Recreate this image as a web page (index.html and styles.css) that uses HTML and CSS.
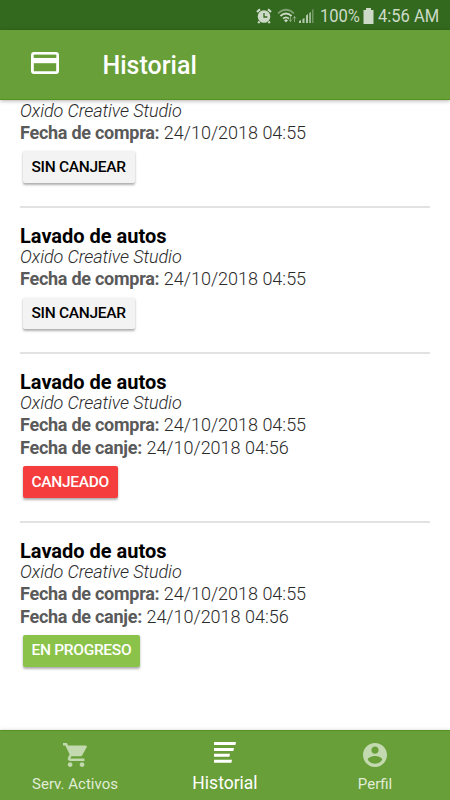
FILE: index.html
```html
<!DOCTYPE html>
<html lang="es">
<head>
<meta charset="utf-8">
<title>Historial</title>
<link rel="stylesheet" href="styles.css">
</head>
<body>
<div class="app">
  <div class="status">
    <svg class="alarm" viewBox="0 0 16 16"><circle cx="8" cy="8.5" r="6.3" fill="currentColor"/><path d="M1 4 4 1.2M15 4 12 1.2M3.5 13.5 2.2 15M12.5 13.5 13.8 15" stroke="currentColor" stroke-width="2.2"/><path d="M8 5v4h3.3" fill="none" stroke="#33691e" stroke-width="1.3"/></svg>
    <svg class="wifi" viewBox="0 0 20 16"><g fill="none" stroke="currentColor" stroke-width="1.7"><path d="M1 5.5Q9 -2 17 5.5" opacity=".5"/><path d="M3.4 8Q9 3 14.6 8M6 10.7Q9 8 12 10.7"/></g><path d="m7 12.3 2-1 2 1-2 2.2z" fill="currentColor"/><path d="M13.5 8.500v5m-1.500-2 1.500 2 1.500-2M17.500 14V8.500m-1.500 2 1.500-2 1.500 2" fill="none" stroke="currentColor" opacity=".5"/></svg>
    <svg class="signal" viewBox="0 0 15 15"><path d="M0 15v-2l2-1v3zM3.500 15v-4l2-1v5zM7 15V7.500l2-1.500v9zM10.300 15V5l1.500-1v11z" fill="currentColor" opacity=".85"/><path d="M13 15V2l1.500-1.500V15z" fill="currentColor" opacity=".4"/></svg>
    <span class="percent">100%</span>
    <svg class="battery" viewBox="0 0 11 16"><path d="M3 0h5v2h2.500v14H.5V2H3z" fill="currentColor"/></svg>
    <span class="clock">4:56 AM</span>
  </div>
  <header class="bar">
    <svg class="card-icon" viewBox="0 0 28 22"><rect x="1.400" y="1.400" width="25.200" height="19.200" rx="1.600" fill="none" stroke="#fff" stroke-width="2.800"/><path d="M1 5.800h26v5.400H1z" fill="#fff"/><path d="M2.800 2.800h22.400v3H2.800z" fill="#689f38"/></svg>
    <h1>Historial</h1>
  </header>
  <main class="content">
    <div class="list">
      <article class="item first">
        <p class="studio">Oxido Creative Studio</p>
        <p class="date"><b>Fecha de compra:</b> <span>24/10/2018 04:55</span></p>
        <button class="btn">SIN CANJEAR</button>
      </article>
      <article class="item">
        <h2>Lavado de autos</h2>
        <p class="studio">Oxido Creative Studio</p>
        <p class="date"><b>Fecha de compra:</b> <span>24/10/2018 04:55</span></p>
        <button class="btn">SIN CANJEAR</button>
      </article>
      <article class="item tall">
        <h2>Lavado de autos</h2>
        <p class="studio">Oxido Creative Studio</p>
        <p class="date"><b>Fecha de compra:</b> <span>24/10/2018 04:55</span></p>
        <p class="date"><b>Fecha de canje:</b> <span>24/10/2018 04:56</span></p>
        <button class="btn red">CANJEADO</button>
      </article>
      <article class="item tall last">
        <h2>Lavado de autos</h2>
        <p class="studio">Oxido Creative Studio</p>
        <p class="date"><b>Fecha de compra:</b> <span>24/10/2018 04:55</span></p>
        <p class="date"><b>Fecha de canje:</b> <span>24/10/2018 04:56</span></p>
        <button class="btn green">EN PROGRESO</button>
      </article>
    </div>
  </main>
  <nav class="tabs">
    <a class="tab">
      <svg class="cart" viewBox="1 2 21 20"><path d="M7 18c-1.100 0-1.990.9-1.990 2S5.900 22 7 22s2-.9 2-2-.9-2-2-2zM1 2v2h2l3.600 7.590-1.350 2.450c-.16.280-.25.610-.25.960 0 1.100.9 2 2 2h12v-2H7.420c-.14 0-.25-.11-.25-.25l.03-.12.9-1.630h7.450c.75 0 1.410-.41 1.750-1.030l3.580-6.490A1.003 1.003 0 0 0 20 4H5.210l-.94-2H1zm16 16c-1.100 0-1.990.9-1.990 2s.89 2 1.990 2 2-.9 2-2-.9-2-2-2z" fill="currentColor"/></svg>
      <span>Serv. Activos</span>
    </a>
    <a class="tab active">
      <svg class="lines" viewBox="0 0 22 21"><path d="M0 0h22l-.6 3H0zM0 5.900h20l-.6 3H0zM0 11.800h16l-.6 3H0zM0 17.700h18l-.6 3H0z" fill="currentColor"/></svg>
      <span>Historial</span>
    </a>
    <a class="tab">
      <svg class="person" viewBox="2 2 20 20"><path d="M12 2C6.480 2 2 6.480 2 12s4.480 10 10 10 10-4.480 10-10S17.520 2 12 2zm0 3c1.660 0 3 1.340 3 3s-1.340 3-3 3-3-1.340-3-3 1.340-3 3-3zm0 14.200a7.200 7.200 0 0 1-6-3.220c.03-1.990 4-3.080 6-3.080 1.990 0 5.970 1.090 6 3.080a7.200 7.200 0 0 1-6 3.220z" fill="currentColor"/></svg>
      <span>Perfil</span>
    </a>
  </nav>
</div>
</body>
</html>
```
FILE: styles.css
```css
* { box-sizing: border-box; }
body { margin: 0; font-family: Roboto, sans-serif; background: #fff; }
h1, h2, p { margin: 0; }
.app { width: 450px; height: 800px; display: flex; flex-direction: column; overflow: hidden; }

.status {
  height: 30px; flex: none; background: #33691e; color: #ccdac7;
  display: flex; align-items: center; justify-content: flex-end;
  padding: 1px 10px 0 0; font-size: 19px; white-space: nowrap;
}
.alarm { width: 16px; height: 16px; margin-right: 5px; }
.wifi { width: 20px; height: 16px; margin-right: 2px; }
.signal { width: 15px; height: 15px; margin-right: 6px; }
.percent { width: 41px; transform: scaleX(.87); transform-origin: 0 50%; }
.battery { width: 11px; height: 16px; margin: 0 4px 0 2px; }
.clock { width: 62px; transform: scaleX(.87); transform-origin: 0 50%; }

.bar {
  height: 70px; flex: none; background: #689f38; color: #fff;
  display: flex; align-items: center; padding-left: 31px;
  border-bottom: 1px solid #559321; box-shadow: 0 1px 4px rgba(0,0,0,.3);
  position: relative; z-index: 1;
}
.card-icon { width: 28px; height: 22px; margin-top: -3px; }
.bar h1 { font-size: 25px; font-weight: 500; line-height: 30px; margin-left: 43.5px; padding-top: 2px; }

.content { flex: 1; min-height: 0; overflow: hidden; padding: 0 20px; }
.list { padding-top: .75px; }
.item { height: 146.25px; padding-top: 17px; border-bottom: 2px solid #e2e2e2; }
.item.first { height: 107.25px; padding-top: 0; }
.item.tall { height: 168.75px; }
.item.last { border-bottom: 0; }
.item h2 { font-size: 20px; line-height: 22px; font-weight: 700; color: #000; }
.studio { font-size: 18px; line-height: 20px; font-style: italic; font-weight: 300; color: #2a2a2a; letter-spacing: -.1px; margin-bottom: 1px; }
.date { font-size: 18px; line-height: 22.5px; color: #2a2a2a; font-weight: 300; white-space: nowrap; }
.date b { font-weight: 700; color: #5a5a5a; letter-spacing: -.26px; }
.btn {
  display: block; height: 31.5px; margin: 7px 0 0 2.5px; padding: 0 9px;
  border: 0; border-radius: 2px; background: #f3f3f3; color: #000;
  font: 500 15.5px/31px Roboto, sans-serif; letter-spacing: -.3px;
  box-shadow: 0 1.5px 2.5px rgba(0,0,0,.3), 0 1px 2px rgba(0,0,0,.04);
}
.btn.red { background: #f53d3d; color: #fff; }
.btn.green { background: #8bc34a; color: #fff; }

.tabs {
  height: 70px; flex: none; display: flex; background: #689f38;
  border-top: 1px solid #559321; box-shadow: 0 -1px 3px rgba(0,0,0,.1);
  position: relative;
}
.tab { flex: 1; display: flex; flex-direction: column; align-items: center; color: #e1ecd7; font-size: 15px; line-height: 20px; padding-top: 12px; }
.tab svg { color: #c3d9af; }
.cart { width: 25px; height: 24px; }
.person { width: 24px; height: 24px; }
.tab span { margin-top: 7px; }
.tab.active { color: #fff; font-size: 17.5px; padding-top: 11px; }
.tab.active svg { color: #fff; }
.lines { width: 22px; height: 21px; }
.tab.active span { margin-top: 10px; }
```
